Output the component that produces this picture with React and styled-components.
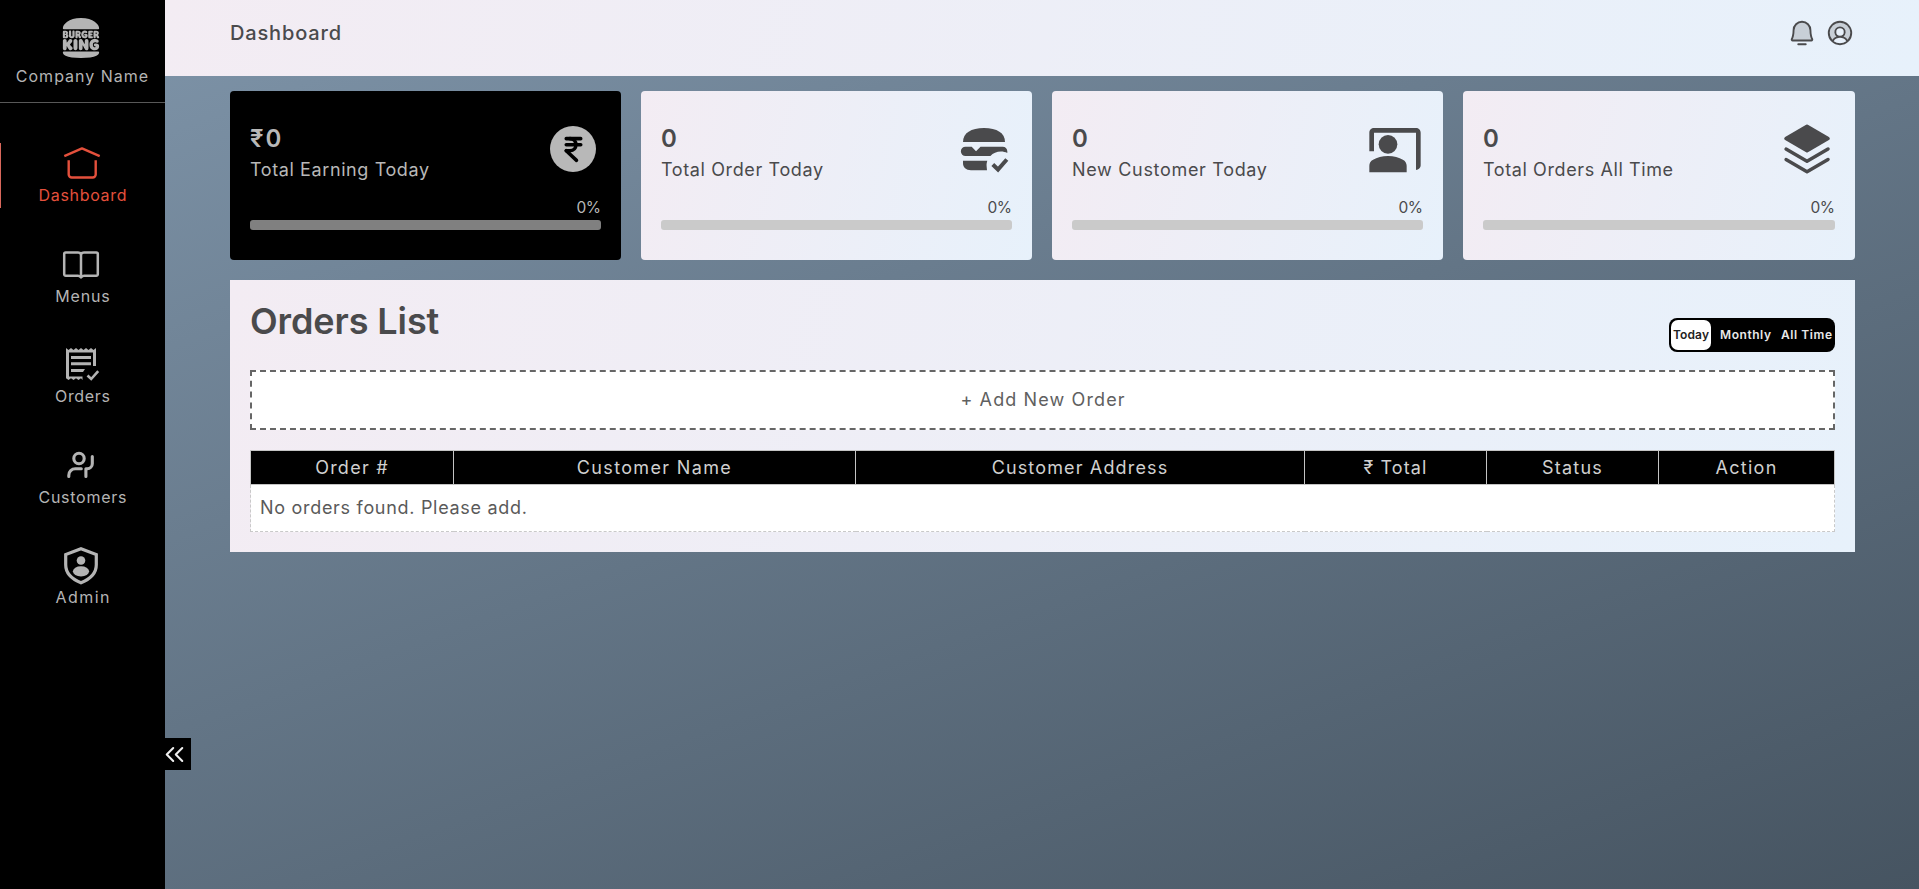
import React from "react";
import styled, { createGlobalStyle, css } from "styled-components";
import { PiBellSimpleDuotone, PiUserCircleDuotone, PiStackFill } from "react-icons/pi";
import { SiBurgerking } from "react-icons/si";
import { MdCoPresent } from "react-icons/md";
import { LuIndianRupee, LuChevronsLeft } from "react-icons/lu";

const LIGHT = "linear-gradient(105deg, #f3ecf3 0%, #e7f1fb 100%)";

const GlobalStyle = createGlobalStyle`
  *, *::before, *::after { box-sizing: border-box; }
  body {
    margin: 0;
    font-family: Inter, "Open Sans", sans-serif;
    color: #4a4a4c;
    background: #465461;
  }
  button { font: inherit; border: 0; padding: 0; cursor: pointer; }
`;

const Page = styled.div`
  display: flex;
  width: 100%;
  height: 100vh;
  overflow: hidden;
  background: linear-gradient(160deg, #8096ab 0%, #465461 100%);
`;

const Text = styled.span`
  display: block;
  white-space: nowrap;
  font-size: ${(p) => p.$size}px;
  font-weight: ${(p) => p.$weight || 400};
  line-height: ${(p) => p.$line}px;
  letter-spacing: ${(p) => p.$track || 0}px;
  margin-right: ${(p) => -(p.$track || 0)}px;
`;

/* ---------- sidebar ---------- */

const Sidebar = styled.aside`
  position: relative;
  flex: 0 0 165px;
  background: #000;
  color: #b4b4b4;
`;

const Brand = styled.div`
  display: flex;
  flex-direction: column;
  align-items: center;
  gap: 8px;
  height: 103px;
  padding: 18px 1px 0 0;
  border-bottom: 1px solid #585858;

  svg { margin-right: 2px; }
`;

const Nav = styled.nav`
  display: flex;
  flex-direction: column;
  gap: 35.5px;
  padding-top: 40px;
`;

const NavItem = styled.a`
  display: flex;
  flex-direction: column;
  align-items: center;
  gap: 2px;
  height: 65px;
  border-left: 1px solid transparent;
  border-right: 1px solid transparent;

  svg { margin-right: ${(p) => (p.$active ? 1 : 3)}px; }

  ${(p) => p.$active && css`
    color: #e4503c;
    border-left-color: #d9685c;
  `}
`;

const CollapseButton = styled.button`
  position: absolute;
  left: 100%;
  bottom: 119px;
  z-index: 1;
  display: flex;
  align-items: center;
  justify-content: flex-start;
  width: 26px;
  height: 32px;
  background: #000;
  color: #f0f0f0;

  svg { flex: none; margin-left: -6px; }
`;

/* ---------- main ---------- */

const Main = styled.div`
  flex: 1;
  min-width: 0;
`;

const Header = styled.header`
  display: flex;
  align-items: center;
  justify-content: space-between;
  height: 76px;
  padding: 0 64px 10px 65px;
  background: ${LIGHT};
`;

const HeaderIcons = styled.div`
  display: flex;
  gap: 8px;
`;

const Content = styled.main`
  display: flex;
  flex-direction: column;
  gap: 20px;
  padding: 15px 64px 0 65px;
`;

const Cards = styled.section`
  display: grid;
  grid-template-columns: repeat(3, 391px) 1fr;
  gap: 20px;
`;

const Card = styled.article`
  height: 169px;
  padding: 20px;
  border-radius: 4px;
  background: ${(p) => (p.$dark ? "#000" : LIGHT)};
  color: ${(p) => (p.$dark ? "#b8b8b8" : "#4a4a4c")};
`;

const CardTop = styled.div`
  display: flex;
  justify-content: space-between;
  height: 86.5px;
  padding-top: 10px;
`;

const Figures = styled.div`
  display: flex;
  flex-direction: column;
  gap: 6px;
  padding-top: 3px;
`;

const Percent = styled.div`
  display: flex;
  justify-content: flex-end;
  margin-bottom: 2.5px;
`;

const Bar = styled.div`
  height: 10px;
  border-radius: 3px;
  background: ${(p) => (p.$dark ? "#808080" : "#cacaca")};
`;

const Panel = styled.section`
  height: 272px;
  padding: 20px;
  background: ${LIGHT};
`;

const PanelHead = styled.div`
  display: flex;
  align-items: flex-end;
  justify-content: space-between;
  height: 52px;
`;

const PanelTitle = styled.h1`
  align-self: flex-start;
  margin: 0;
`;

const Toggle = styled.div`
  display: grid;
  grid-template-columns: 40px 69px 53px;
  height: 34px;
  padding: 2px;
  border-radius: 8px;
  background: #000;
`;

const ToggleOption = styled.button`
  display: flex;
  align-items: center;
  justify-content: center;
  border-radius: 7px;
  background: ${(p) => (p.$on ? "#fff" : "#000")};
  color: ${(p) => (p.$on ? "#222" : "#e8e8e8")};
`;

const AddOrder = styled.button`
  display: flex;
  align-items: center;
  justify-content: center;
  width: 100%;
  height: 60px;
  margin: 18px 0 20px;
  border: 2px dashed #666;
  background: #fff;
  color: #606060;
`;

const Table = styled.table`
  width: 100%;
  table-layout: fixed;
  border-collapse: collapse;
`;

const Th = styled.th`
  width: ${(p) => p.$width}px;
  height: 34px;
  padding: 0;
  border: 1px solid #c4c4c4;
  background: #000;
  color: #d0d0d0;
  font-size: 18px;
  font-weight: 400;
  letter-spacing: ${(p) => p.$track}px;
`;

const EmptyCell = styled.td`
  height: 47px;
  padding: 0 0 0 9px;
  border: 1px dashed #c9c9c9;
  background: #fff;
  color: #5a5a5a;
`;

/* ---------- icons ---------- */

const HomeIcon = () => (
  <svg width="40" height="40" viewBox="0 0 40 40" fill="none" stroke="currentColor" strokeWidth="2.4" strokeLinejoin="round">
    <path d="M2.3 13.2 20 5.4l17.7 7.8" />
    <path d="M6.700 17.200v14.300a3 3 0 0 0 3 3h21a3 3 0 0 0 3-3V17.200" />
  </svg>
);

const BookIcon = () => (
  <svg width="40" height="40" viewBox="0 0 40 40" fill="none" stroke="currentColor" strokeWidth="2.500" strokeLinejoin="round">
    <path d="M20 33.500c-.8-1.500-1.800-1.700-3.200-1.700H4.700a1.500 1.500 0 0 1-1.500-1.500V10a1.500 1.500 0 0 1 1.500-1.500H17c1.500 0 2.400.5 3 1.500.6-1 1.500-1.500 3-1.500h12.300a1.500 1.500 0 0 1 1.500 1.500v20.300a1.500 1.500 0 0 1-1.500 1.500H23.200c-1.400 0-2.400.2-3.200 1.700z" />
    <path d="M20 10v24" />
  </svg>
);

const OrdersIcon = () => (
  <svg width="40" height="40" viewBox="0 0 40 40" fill="currentColor">
    <path d="M5 4l2.5 2L10 4l2.5 2L15 4l2.5 2L20 4l2.5 2L25 4l2.5 2L30 4l2.5 2L35 4v18h-3V8.4H8V32.4h13.5V36L20 34.2 17.5 36 15 34.2 12.5 36 10 34.2 7.5 36 5 34.2z" />
    <path d="M10 12h20v3H10zM10 18.300h20v3H10zM10 25h14l-2 3H10z" />
    <path d="M26.500 31.500l3.700 3.500 7-7.800" fill="none" stroke="currentColor" strokeWidth="2.600" />
  </svg>
);

const CustomersIcon = () => (
  <svg width="40" height="40" viewBox="0 0 40 40" fill="none" stroke="currentColor" strokeWidth="3.100" strokeLinecap="round" strokeLinejoin="round">
    <circle cx="18" cy="13.500" r="5.200" />
    <path d="M7.800 31.500v-1.300a6.500 6.500 0 0 1 6.500-6.500h6" />
    <path d="M31.300 11.500v7.200a5 5 0 0 1-5 5H24.900v7.800" />
  </svg>
);

const AdminIcon = () => (
  <svg width="40" height="40" viewBox="0 0 40 40" fill="currentColor">
    <path d="M20 3.800 35.300 9.500v10.200c0 8.500-6 14.300-15.300 18-9.300-3.700-15.300-9.500-15.300-18V9.500z" fill="none" stroke="currentColor" strokeWidth="3.200" />
    <circle cx="20" cy="15.500" r="4.300" />
    <ellipse cx="20" cy="26.300" rx="8.100" ry="5.100" />
  </svg>
);

const RupeeBadge = styled.span`
  display: flex;
  align-items: center;
  justify-content: center;
  width: 46px;
  height: 46px;
  margin: 5px;
  border-radius: 50%;
  background: #b8b8b8;
  color: #000;
`;

const BurgerIcon = () => (
  <svg width="56" height="56" viewBox="0 0 56 56" fill="currentColor">
    <path d="M7 21C7 12 15 7 28 7s21 5 21 14z" />
    <path d="M9.500 25.700h6.200L20 30.200l4.500-4.500H46.700c2.600 0 4.600 2 4.600 4.600v1.700c-2-1-4-1.500-6.300-1.500-4.300 0-8 1.600-10.600 4.500H9.500a4.650 4.650 0 0 1 0-9.300z" />
    <path d="M7 39.700h24.300c-.6 2-.8 3.600-.7 5.200l.4 4.300H15c-5 0-8-3-8-7z" />
    <path d="M36.800 43.500l5.200 5L50.800 38.500" fill="none" stroke="currentColor" strokeWidth="4" />
  </svg>
);

/* ---------- data ---------- */

const NAV = [
  { label: "Dashboard", track: 0.68, icon: <HomeIcon />, active: true },
  { label: "Menus", track: 0.84, icon: <BookIcon /> },
  { label: "Orders", track: 0.68, icon: <OrdersIcon /> },
  { label: "Customers", track: 0.74, icon: <CustomersIcon /> },
  { label: "Admin", track: 1.4, icon: <AdminIcon /> },
];

const STATS = [
  { value: "₹0", label: "Total Earning Today", track: 0.6, dark: true, icon: <RupeeBadge><LuIndianRupee size={29} strokeWidth={2.9} /></RupeeBadge> },
  { value: "0", label: "Total Order Today", track: 0.62, icon: <BurgerIcon /> },
  { value: "0", label: "New Customer Today", track: 0.68, icon: <MdCoPresent size={56} /> },
  { value: "0", label: "Total Orders All Time", track: 0.6, icon: <PiStackFill size={56} /> },
];

const RANGES = [
  { label: "Today", track: 0.12, on: true },
  { label: "Monthly", track: 0.56 },
  { label: "All Time", track: 0.57 },
];

const COLUMNS = [
  { label: "Order #", width: 203, track: 1.25 },
  { label: "Customer Name", width: 402, track: 1.35 },
  { label: "Customer Address", width: 449, track: 1.15 },
  { label: "₹ Total", width: 182, track: 1.1 },
  { label: "Status", width: 172, track: 1.25 },
  { label: "Action", width: 176, track: 1.3 },
];

export default function App() {
  return (
    <>
      <GlobalStyle />
      <Page>
        <Sidebar>
          <Brand>
            <SiBurgerking size={40} />
            <Text $size={16} $line={20} $track={1}>Company Name</Text>
          </Brand>
          <Nav>
            {NAV.map((n) => (
              <NavItem key={n.label} $active={n.active}>
                {n.icon}
                <Text $size={16} $line={20} $track={n.track}>{n.label}</Text>
              </NavItem>
            ))}
          </Nav>
          <CollapseButton aria-label="Collapse sidebar">
            <LuChevronsLeft size={31} strokeWidth={1.6} />
          </CollapseButton>
        </Sidebar>
        <Main>
          <Header>
            <Text $size={20} $line={24} $weight={500} $track={0.84}>Dashboard</Text>
            <HeaderIcons>
              <PiBellSimpleDuotone size={30} />
              <PiUserCircleDuotone size={30} />
            </HeaderIcons>
          </Header>
          <Content>
            <Cards>
              {STATS.map((s) => (
                <Card key={s.label} $dark={s.dark}>
                  <CardTop>
                    <Figures>
                      <Text $size={24} $line={29} $weight={600} $track={2}>{s.value}</Text>
                      <Text $size={18} $line={22} $track={s.track}>{s.label}</Text>
                    </Figures>
                    {s.icon}
                  </CardTop>
                  <Percent>
                    <Text $size={15.5} $line={20} $track={-0.6}>0%</Text>
                  </Percent>
                  <Bar $dark={s.dark} />
                </Card>
              ))}
            </Cards>
            <Panel>
              <PanelHead>
                <PanelTitle>
                  <Text $size={36} $line={43} $weight={600} $track={-0.1}>Orders List</Text>
                </PanelTitle>
                <Toggle>
                  {RANGES.map((r) => (
                    <ToggleOption key={r.label} $on={r.on}>
                      <Text $size={12} $line={16} $weight={600} $track={r.track}>{r.label}</Text>
                    </ToggleOption>
                  ))}
                </Toggle>
              </PanelHead>
              <AddOrder>
                <Text $size={18} $line={22} $track={1.12}>+ Add New Order</Text>
              </AddOrder>
              <Table>
                <thead>
                  <tr>
                    {COLUMNS.map((c) => (
                      <Th key={c.label} $width={c.width} $track={c.track}>{c.label}</Th>
                    ))}
                  </tr>
                </thead>
                <tbody>
                  <tr>
                    <EmptyCell colSpan={6}>
                      <Text $size={18} $line={22} $track={0.7}>No orders found. Please add.</Text>
                    </EmptyCell>
                  </tr>
                </tbody>
              </Table>
            </Panel>
          </Content>
        </Main>
      </Page>
    </>
  );
}
